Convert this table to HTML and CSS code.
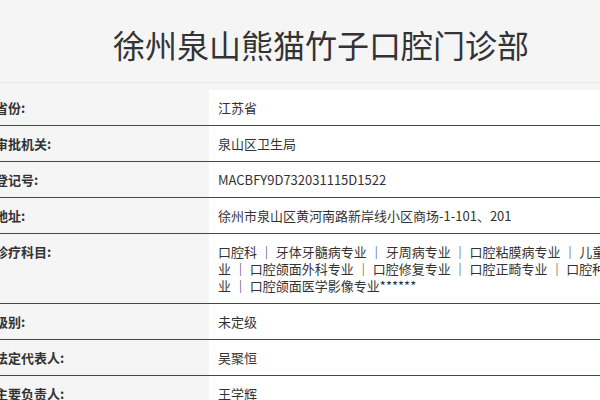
FILE: index.html
```html
<!DOCTYPE html>
<html lang="zh-CN">
<head>
<meta charset="utf-8">
<title>徐州泉山熊猫竹子口腔门诊部</title>
<link rel="stylesheet" href="styles.css">
</head>
<body>
<div class="page">
  <header class="header">
    <h1 class="title">徐州泉山熊猫竹子口腔门诊部</h1>
  </header>
  <div class="info">
    <div class="row"><div class="label">省份:</div><div class="value">江苏省</div></div>
    <div class="row"><div class="label">审批机关:</div><div class="value">泉山区卫生局</div></div>
    <div class="row"><div class="label">登记号:</div><div class="value">MACBFY9D732031115D1522</div></div>
    <div class="row"><div class="label">地址:</div><div class="value">徐州市泉山区黄河南路新岸线小区商场-1-101、201</div></div>
    <div class="row"><div class="label">诊疗科目:</div><div class="value"><span class="line">口腔科 ｜ 牙体牙髓病专业 ｜ 牙周病专业 ｜ 口腔粘膜病专业 ｜ 儿童口腔专</span><span class="line">业 ｜ 口腔颌面外科专业 ｜ 口腔修复专业 ｜ 口腔正畸专业 ｜ 口腔种植专</span><span class="line">业 ｜ 口腔颌面医学影像专业******</span></div></div>
    <div class="row"><div class="label">级别:</div><div class="value">未定级</div></div>
    <div class="row"><div class="label">法定代表人:</div><div class="value">吴聚恒</div></div>
    <div class="row"><div class="label">主要负责人:</div><div class="value">王学辉</div></div>
  </div>
</div>
</body>
</html>
```

FILE: styles.css
```css
html, body {
  margin: 0;
  padding: 0;
  background: #f5f5f5;
  overflow: hidden;
}
body {
  font-family: "Noto Sans CJK SC", "Noto Sans", sans-serif;
  color: #333;
}
.page {
  margin-left: -40px;
  width: 722px;
}
.header {
  box-sizing: border-box;
  height: 83px;
  padding-top: 5px;
  border-bottom: 1px solid #e4e4e4;
  display: flex;
  align-items: center;
  justify-content: center;
}
.title {
  margin: 0;
  font-size: 32px;
  font-weight: normal;
  line-height: 40px;
  color: #333;
}
.info {
  margin-top: 7px;
}
.row {
  display: grid;
  grid-template-columns: 249px 1fr;
  border-bottom: 1px solid #1d5e3c;
  font-size: 13px;
  line-height: 17px;
}
.label {
  padding: 9px 0 9px 35px;
  font-weight: bold;
  color: #333;
  background: #f5f5f5;
}
.value {
  padding: 9px 0 9px 9px;
  background: #fff;
  color: #333;
}
.line {
  display: block;
  white-space: nowrap;
}
```
